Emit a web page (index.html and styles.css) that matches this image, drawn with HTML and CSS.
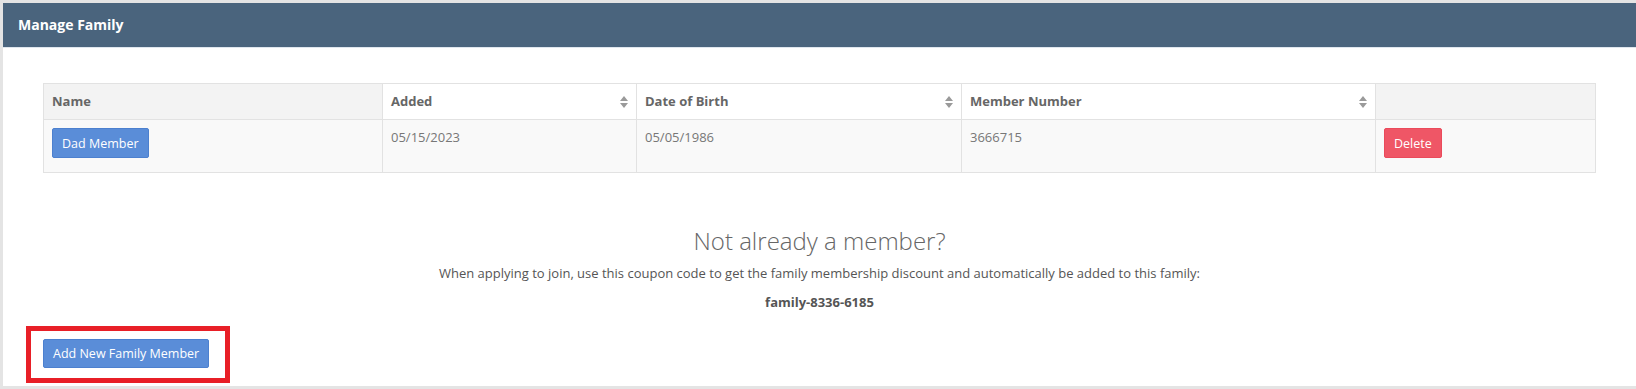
FILE: index.html
```html
<!DOCTYPE html>
<html lang="en">

<head>
  <meta charset="UTF-8">
  <title>Manage Family</title>
  <link rel="stylesheet" href="styles.css">
</head>

<body>
  <div class="panel">
    <div class="panel-heading">Manage Family</div>
    <div class="panel-body">
      <table class="family-table">
        <colgroup>
          <col style="width: 339px">
          <col style="width: 254px">
          <col style="width: 325px">
          <col style="width: 414px">
          <col>
        </colgroup>
        <thead>
          <tr>
            <th>Name</th>
            <th class="sortable">Added <span class="sort-icon"><svg width="8" height="12" viewBox="0 0 8 12"><path d="M4 0L8 5H0z M0 7H8L4 12z" fill="#9a9a9a"/></svg></span></th>
            <th class="sortable">Date of Birth <span class="sort-icon"><svg width="8" height="12" viewBox="0 0 8 12"><path d="M4 0L8 5H0z M0 7H8L4 12z" fill="#9a9a9a"/></svg></span></th>
            <th class="sortable">Member Number <span class="sort-icon"><svg width="8" height="12" viewBox="0 0 8 12"><path d="M4 0L8 5H0z M0 7H8L4 12z" fill="#9a9a9a"/></svg></span></th>
            <th></th>
          </tr>
        </thead>
        <tbody>
          <tr>
            <td><button class="btn btn-primary">Dad Member</button></td>
            <td>05/15/2023</td>
            <td>05/05/1986</td>
            <td>3666715</td>
            <td><button class="btn btn-danger">Delete</button></td>
          </tr>
        </tbody>
      </table>

      <div class="join">
        <h3>Not already a member?</h3>
        <p>When applying to join, use this coupon code to get the family membership discount and automatically be added to this family:</p>
        <p class="coupon">family-8336-6185</p>
      </div>

      <div class="highlight">
        <button class="btn btn-primary">Add New Family Member</button>
      </div>
    </div>
  </div>
</body>

</html>
```

FILE: styles.css
```css
body {
  margin: 0;
  padding: 3px 0 3px 3px;
  background-color: #e4e4e4;
  font-family: "Open Sans", sans-serif;
  font-size: 13px;
  color: #666;
}

.panel {
  background-color: #fff;
}

.panel-heading {
  height: 44px;
  line-height: 44px;
  padding-left: 15px;
  background-color: #4a647d;
  border-bottom: 1px solid #dfe6ee;
  color: #fff;
  font-size: 14px;
  font-weight: 700;
}

.panel-body {
  padding: 35px 40px 3px 40px;
}

.family-table {
  width: 100%;
  table-layout: fixed;
  border-collapse: collapse;
}

.family-table th,
.family-table td {
  border: 1px solid #e2e2e2;
  padding: 8px;
  text-align: left;
  vertical-align: top;
  line-height: 19px;
}

.family-table th {
  background-color: #f3f3f3;
  font-weight: 700;
  color: #666;
}

.family-table th.sortable {
  background-color: #fff;
  position: relative;
}

.sort-icon {
  position: absolute;
  right: 8px;
  top: 12px;
  line-height: 0;
}

.family-table td {
  background-color: #f9f9f9;
  color: #777;
  padding-bottom: 14px;
}

.btn {
  font-family: "Open Sans", sans-serif;
  font-size: 12.5px;
  color: #fff;
  border-radius: 2px;
  height: 30px;
  padding: 0 9px;
  cursor: pointer;
}

.btn-primary {
  background-color: #5a8dd8;
  border: 1px solid #4c80cf;
}

.btn-danger {
  background-color: #ef5666;
  border: 1px solid #ea4a5b;
}

.join {
  text-align: center;
  margin-top: 52px;
}

.join h3 {
  margin: 0;
  font-size: 24px;
  font-weight: 300;
  line-height: 32px;
  color: #666;
}

.join p {
  margin: 6px 0 0 0;
  line-height: 20px;
  color: #555;
}

.join .coupon {
  margin-top: 9px;
  font-weight: 700;
}

.highlight {
  display: inline-block;
  margin: 14px 0 0 -17px;
  padding: 8px 16px 10px 12px;
  border: 5px solid #e81f27;
}

.highlight .btn {
  height: 29px;
  display: block;
}
```
